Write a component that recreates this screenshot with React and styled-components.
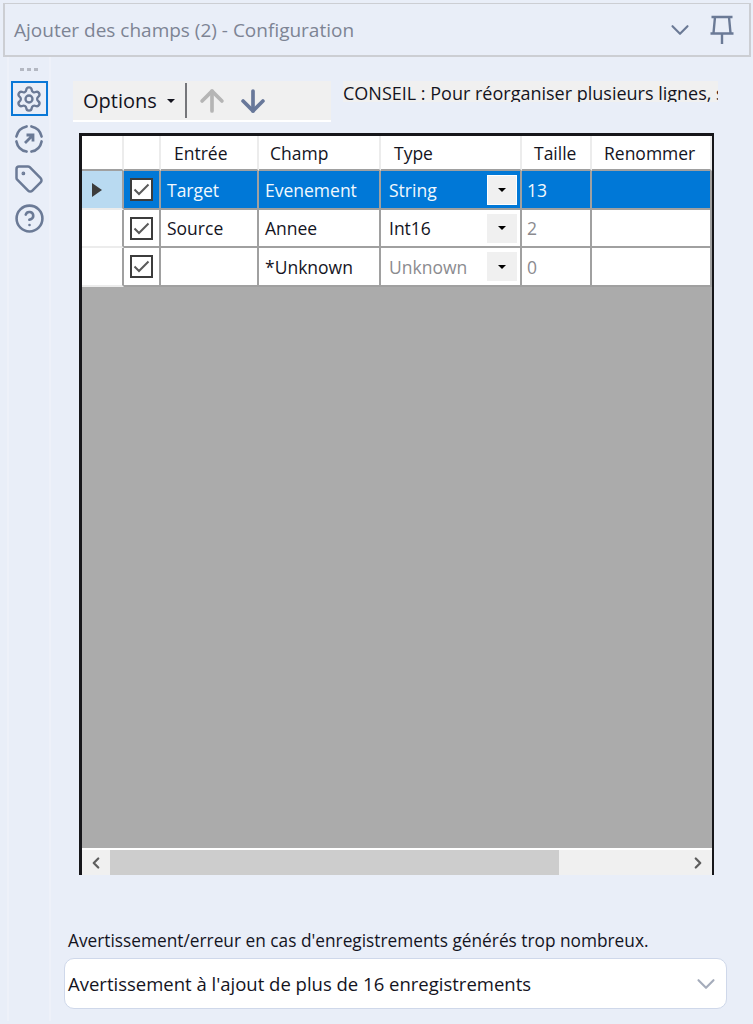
import React from "react";
import styled, { createGlobalStyle } from "styled-components";
import { ChevronDown, ChevronLeft, ChevronRight, ArrowUp, ArrowDown, Settings, Tag, CircleHelp } from "lucide-react";

const GlobalStyle = createGlobalStyle`
  html, body {
    margin: 0;
    background: #e9eef8;
  }
  * {
    box-sizing: border-box;
  }
`

const Page = styled.div`
  width: 753px;
  height: 1024px;
  overflow: hidden;
  padding-top: 3px;
  background: #e9eef8;
  font-family: "Open Sans", "Liberation Sans", sans-serif;
  color: #14141e;
`

const Header = styled.div`
  height: 54px;
  margin: 0 2px 0 3px;
  padding: 0 15px 0 9px;
  border: 2px solid #ccced3;
  border-top-width: 1px;
  display: flex;
  align-items: center;
  justify-content: space-between;
  color: #7d8494;
`

const HeaderTitle = styled.div`
  font-size: 19px;
`

const HeaderIcons = styled.div`
  display: flex;
  align-items: center;
  gap: 15px;
  color: #6b7a96;
`

const Body = styled.div`
  display: flex;
`

const SideBar = styled.div`
  width: 44px;
  height: 964px;
  margin-left: 7px;
  padding-top: 8px;
  border-right: 2px solid #eef1f9;
  border-left: 2px solid #eef1f9;
  display: flex;
  flex-direction: column;
  align-items: center;
`

const Dots = styled.div`
  display: flex;
  gap: 3px;
  height: 16px;
  padding-top: 3px;

  span {
    width: 4px;
    height: 3px;
    background: #b4b8c2;
  }
`

const SideButton = styled.div`
  width: 37px;
  height: 35px;
  margin-bottom: 5px;
  border: 2px solid ${props => (props.$active ? "#0a78d7" : "transparent")};
  display: flex;
  align-items: center;
  justify-content: center;
  color: #6b7a96;
`

const Content = styled.div`
  flex: 1;
  padding: 24px 0 0 22px;
`

const TopRow = styled.div`
  display: flex;
  align-items: flex-start;
  gap: 12px;
`

const ToolBar = styled.div`
  width: 258px;
  height: 41px;
  padding-left: 10px;
  background: #f0f0f0;
  border-bottom: 2px solid #fff;
  display: flex;
  align-items: center;
  font-size: 20px;
`

const CaretDown = styled.span`
  width: 0;
  height: 0;
  margin-left: 10px;
  border-left: 4px solid transparent;
  border-right: 4px solid transparent;
  border-top: 4px solid #14141e;
`

const ToolSep = styled.span`
  width: 2px;
  height: 35px;
  margin: 0 8px 0 10px;
  background: #75767a;
`

const ToolIcon = styled.span`
  display: flex;
  width: 41px;
  color: ${props => (props.$disabled ? "#b5b5b5" : "#68789a")};
`

const Hint = styled.div`
  width: 375px;
  height: 21px;
  overflow: hidden;
  white-space: nowrap;
  background: #f0f0f0;
  font-size: 18px;
  line-height: 25px;
`

const GridBox = styled.div`
  width: 635px;
  height: 742px;
  margin: 11px 0 0 6px;
  border: 3px solid #16161a;
  border-bottom: none;
  border-right-width: 2px;
  background: #ababab;
  display: flex;
  flex-direction: column;
`

const Rows = styled.div`
  flex: 1;
  overflow: hidden;
`

const Row = styled.div`
  height: ${props => props.$height}px;
  display: grid;
  grid-template-columns: 42px 37px 98px 122px 141px 70px 120px;
`

const HeadCell = styled.div`
  background: #fff;
  border-right: 2px solid #ececec;
  border-bottom: 2px solid #a0a0a0;
  font-size: 17.5px;
  padding: 1px 0 0 ${props => props.$pad || 12}px;
  display: flex;
  align-items: center;
`

const RowHead = styled.div`
  background: ${props => (props.$selected ? "#b9daf1" : "#fff")};
  border-bottom: 2px solid #ececec;
  border-right: 2px solid #a0a0a0;
  display: flex;
  align-items: center;
  justify-content: center;
`

const RowArrow = styled.span`
  width: 0;
  height: 0;
  margin-right: 11px;
  border-top: 7px solid transparent;
  border-bottom: 7px solid transparent;
  border-left: 10px solid #3c3c3c;
`

const Cell = styled.div`
  background: ${props => (props.$selected ? "#0078d7" : "#fff")};
  color: ${props => (props.$selected ? "#f2f8fd" : props.$muted ? "#8b8b8f" : "#14141e")};
  border-right: 2px solid #a0a0a0;
  border-bottom: 2px solid #a0a0a0;
  padding-left: ${props => props.$pad || 6}px;
  font-size: 17.5px;
  display: flex;
  align-items: center;
  justify-content: space-between;
`

const CheckCell = styled(Cell)`
  padding-left: 0;
  justify-content: center;
`

const CheckBox = styled.span`
  width: 23px;
  height: 23px;
  background: #fff;
  border: 2px solid #3c3c3c;
  display: flex;
  align-items: center;
  justify-content: center;
`

const DropButton = styled.span`
  width: 30px;
  height: ${props => (props.$selected ? 30 : 29)}px;
  margin-right: 3px;
  background: #f0f0f0;
  border: ${props => (props.$selected ? "1px solid #fff" : "none")};
  display: flex;
  align-items: center;
  justify-content: center;

  ${CaretDown} {
    margin: 0;
    border-top-color: #000;
  }
`

const ScrollBar = styled.div`
  height: 27px;
  margin-top: 2px;
  background: #f0f0f0;
  border-top: 2px solid #fff;
  display: flex;
  align-items: center;
  justify-content: space-between;
`

const ScrollEnd = styled.span`
  width: 28px;
  display: flex;
  justify-content: center;
  color: #5e5e5e;
`

const ScrollThumb = styled.div`
  width: 449px;
  height: 100%;
  background: #cdcdcd;
`

const ScrollTrack = styled.div`
  flex: 1;
  height: 100%;
`

const Warn = styled.div`
  margin: 55px 0 0 -5px;
  font-size: 17.3px;
  line-height: 22px;
`

const SelectBox = styled.div`
  width: 663px;
  height: 51px;
  margin: 6px 0 0 -9px;
  padding: 0 5px 0 3px;
  background: #fff;
  border: 1px solid #cfd8ea;
  border-radius: 10px;
  display: flex;
  align-items: center;
  justify-content: space-between;
  font-size: 18.5px;
  color: #a5acbb;
`

const SelectText = styled.span`
  color: #14141e;
`

const RouteIcon = () => (
  <svg width="30" height="30" viewBox="0 0 30 30" fill="none" stroke="currentColor" strokeWidth="2.6" strokeLinecap="round">
    <path d="M2.4 12.6A13 13 0 0 1 12.6 2.4" />
    <path d="M17.4 2.4A13 13 0 0 1 27.6 12.6" />
    <path d="M27.6 17.4A13 13 0 0 1 17.4 27.6" />
    <path d="M12.6 27.6A13 13 0 0 1 2.4 17.4" />
    <path d="M11 19L18.5 11.5M12.5 11H19V17.5" strokeWidth="2.8" strokeLinecap="butt" />
  </svg>
)

const PinIcon = () => (
  <svg width="24" height="29" viewBox="0 0 24 29" fill="none" stroke="currentColor" strokeWidth="2.4">
    <path d="M1.5 2h21M5 2L3.5 18M19 2L20.5 18M0.5 18.5h23M12 18.5V29" />
  </svg>
)

const Check = () => (
  <svg width="17" height="13" viewBox="0 0 17 13" fill="none" stroke="#5a5a5a" strokeWidth="2">
    <path d="M1.5 6.5L6 11L15.5 1.5" />
  </svg>
)

const rows = [
  { input: "Target", field: "Evenement", type: "String", size: "13", selected: true, height: 39 },
  { input: "Source", field: "Annee", type: "Int16", size: "2", height: 38 },
  { input: "", field: "*Unknown", type: "Unknown", size: "0", unknown: true, height: 39 },
];

function App() {
  return (
    <Page>
      <GlobalStyle />
      <Header>
        <HeaderTitle>Ajouter des champs (2) - Configuration</HeaderTitle>
        <HeaderIcons>
          <ChevronDown size={30} strokeWidth={1.7} />
          <PinIcon />
        </HeaderIcons>
      </Header>
      <Body>
        <SideBar>
          <Dots><span /><span /><span /></Dots>
          <SideButton $active><Settings size={28} strokeWidth={2} /></SideButton>
          <SideButton><RouteIcon /></SideButton>
          <SideButton><Tag size={30} strokeWidth={2} /></SideButton>
          <SideButton><CircleHelp size={31} strokeWidth={2} /></SideButton>
        </SideBar>
        <Content>
          <TopRow>
            <ToolBar>
              Options
              <CaretDown />
              <ToolSep />
              <ToolIcon $disabled><ArrowUp size={34} strokeWidth={2.6} /></ToolIcon>
              <ToolIcon><ArrowDown size={34} strokeWidth={2.6} /></ToolIcon>
            </ToolBar>
            <Hint>CONSEIL : Pour réorganiser plusieurs lignes, sélectionnez-les</Hint>
          </TopRow>
          <GridBox>
            <Rows>
              <Row $height={35}>
                <HeadCell />
                <HeadCell />
                <HeadCell $pad={13}>Entrée</HeadCell>
                <HeadCell $pad={11}>Champ</HeadCell>
                <HeadCell $pad={13}>Type</HeadCell>
                <HeadCell>Taille</HeadCell>
                <HeadCell>Renommer</HeadCell>
              </Row>
              {rows.map(row => (
                <Row key={row.field} $height={row.height}>
                  <RowHead $selected={row.selected}>{row.selected && <RowArrow />}</RowHead>
                  <CheckCell $selected={row.selected}>
                    <CheckBox><Check /></CheckBox>
                  </CheckCell>
                  <Cell $selected={row.selected}>{row.input}</Cell>
                  <Cell $selected={row.selected}>{row.field}</Cell>
                  <Cell $selected={row.selected} $muted={row.unknown} $pad={8}>
                    {row.type}
                    <DropButton $selected={row.selected}><CaretDown /></DropButton>
                  </Cell>
                  <Cell $selected={row.selected} $muted $pad={5}>{row.size}</Cell>
                  <Cell $selected={row.selected} />
                </Row>
              ))}
            </Rows>
            <ScrollBar>
              <ScrollEnd><ChevronLeft size={18} strokeWidth={3} /></ScrollEnd>
              <ScrollThumb />
              <ScrollTrack />
              <ScrollEnd><ChevronRight size={18} strokeWidth={3} /></ScrollEnd>
            </ScrollBar>
          </GridBox>
          <Warn>Avertissement/erreur en cas d'enregistrements générés trop nombreux.</Warn>
          <SelectBox>
            <SelectText>Avertissement à l'ajout de plus de 16 enregistrements</SelectText>
            <ChevronDown size={30} strokeWidth={1.7} />
          </SelectBox>
        </Content>
      </Body>
    </Page>
  )
}
export default App;
